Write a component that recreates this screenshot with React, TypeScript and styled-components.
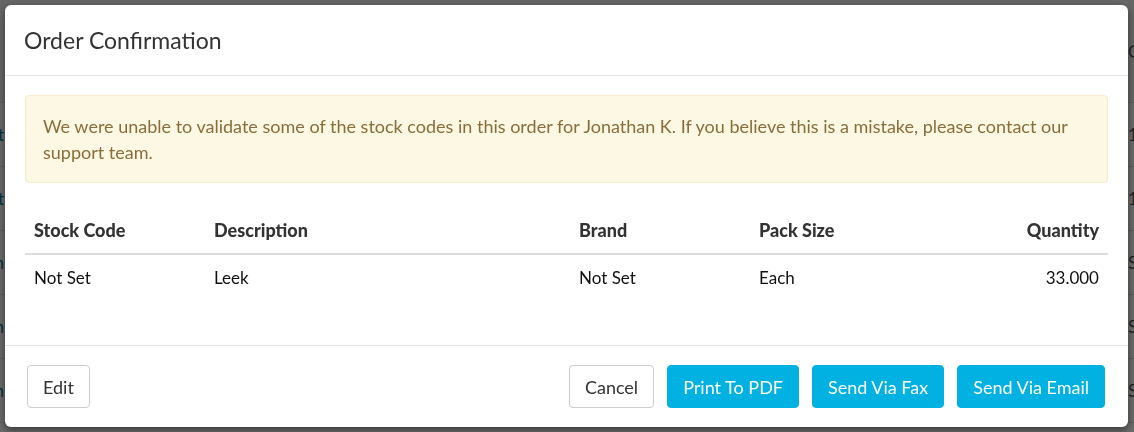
import React from 'react';
import styled, { createGlobalStyle } from 'styled-components';

interface OrderLine {
  stockCode: string;
  description: string;
  brand: string;
  packSize: string;
  quantity: number;
}

const lines: OrderLine[] = [
  { stockCode: 'Not Set', description: 'Leek', brand: 'Not Set', packSize: 'Each', quantity: 33 },
];

const behindRows = [
  { left: 'Chestnut', right: '1' },
  { left: 'Apricot', right: '1' },
  { left: 'Smith', right: 'Sent' },
  { left: 'Smith', right: 'Sent' },
  { left: 'Smith', right: 'Sent' },
];

const GlobalStyle = createGlobalStyle`
  html, body {
    margin: 0;
    padding: 0;
    background: #ffffff;
  }
  body {
    font-family: Lato, "Open Sans", Arial, sans-serif;
    color: #222;
  }
`;

const App: React.FC = () => (
  <>
    <GlobalStyle />
    <PageBehind>
      <PageHead>
        <HeadCell />
        <RightText>Created</RightText>
      </PageHead>
      {behindRows.map((row, i) => (
        <BehindRow key={i}>
          <LeftText>{row.left}</LeftText>
          <RightText>{row.right}</RightText>
        </BehindRow>
      ))}
    </PageBehind>
    <Backdrop>
      <Dialog>
        <Header>
          <Title>Order Confirmation</Title>
        </Header>
        <Body>
          <Alert>
            We were unable to validate some of the stock codes in this order for Jonathan K. If you
            believe this is a mistake, please contact our support team.
          </Alert>
          <Table>
            <colgroup>
              <col style={{ width: 180 }} />
              <col style={{ width: 365 }} />
              <col style={{ width: 180 }} />
              <col style={{ width: 180 }} />
              <col />
            </colgroup>
            <thead>
              <tr>
                <Th>Stock Code</Th>
                <Th>Description</Th>
                <Th>Brand</Th>
                <Th>Pack Size</Th>
                <Th alignRight>Quantity</Th>
              </tr>
            </thead>
            <tbody>
              {lines.map((line, i) => (
                <tr key={i}>
                  <Td>{line.stockCode}</Td>
                  <Td>{line.description}</Td>
                  <Td>{line.brand}</Td>
                  <Td>{line.packSize}</Td>
                  <Td alignRight>{line.quantity.toFixed(3)}</Td>
                </tr>
              ))}
            </tbody>
          </Table>
        </Body>
        <Footer>
          <Button>Edit</Button>
          <Actions>
            <Button>Cancel</Button>
            <Button primary>Print To PDF</Button>
            <Button primary>Send Via Fax</Button>
            <Button primary>Send Via Email</Button>
          </Actions>
        </Footer>
      </Dialog>
    </Backdrop>
  </>
);

const PageBehind = styled.div`
  height: 432px;
  overflow: hidden;
  background: #ffffff;
`;

const PageHead = styled.div`
  height: 102px;
  display: flex;
  justify-content: space-between;
  align-items: center;
  background: #f4f4f4;
  border-bottom: 1px solid #e0e0e0;
`;

const HeadCell = styled.div`
  width: 4px;
`;

const BehindRow = styled.div`
  height: 63px;
  display: flex;
  justify-content: space-between;
  align-items: center;
  border-bottom: 1px solid #e0e0e0;
`;

const LeftText = styled.div`
  width: 4px;
  overflow: hidden;
  direction: rtl;
  white-space: nowrap;
  font-size: 17px;
  color: #007a94;
`;

const RightText = styled.div`
  width: 6px;
  overflow: hidden;
  white-space: nowrap;
  font-size: 17px;
  color: #555;
`;

const Backdrop = styled.div`
  position: fixed;
  inset: 0;
  background: rgba(0, 0, 0, 0.58);
  padding: 5px 6px 5px 5px;
  display: flex;
  align-items: flex-start;
`;

const Dialog = styled.div`
  width: 1123px;
  background: #ffffff;
  border-radius: 6px;
  box-shadow: 0 3px 9px rgba(0, 0, 0, 0.5);
  display: flex;
  flex-direction: column;
`;

const Header = styled.div`
  padding: 18px 19px;
  border-bottom: 1px solid #e5e5e5;
`;

const Title = styled.h4`
  margin: 0;
  font-size: 23px;
  font-weight: 400;
  line-height: 34px;
  color: #333;
`;

const Body = styled.div`
  padding: 19px 20px 20px;
`;

const Alert = styled.div`
  padding: 17px 17px;
  border: 1px solid #faebcc;
  border-radius: 4px;
  background: #fcf8e3;
  color: #8a6d3b;
  font-size: 18px;
  line-height: 26px;
  margin-bottom: 24px;
`;

const Table = styled.table`
  width: 100%;
  border-collapse: collapse;
  table-layout: fixed;
  margin-bottom: 24px;
`;

const Th = styled.th<{ alignRight?: boolean }>`
  padding: 8px 9px;
  border-bottom: 2px solid #dddddd;
  text-align: ${({ alignRight }) => (alignRight ? 'right' : 'left')};
  font-size: 18px;
  font-weight: 900;
  line-height: 30px;
  color: #333;
`;

const Td = styled.td<{ alignRight?: boolean }>`
  padding: 8px 9px;
  text-align: ${({ alignRight }) => (alignRight ? 'right' : 'left')};
  font-size: 17px;
  line-height: 30px;
  color: #111;
`;

const Footer = styled.div`
  padding: 19px 23px 19px 22px;
  border-top: 1px solid #e5e5e5;
  display: flex;
  justify-content: space-between;
  align-items: center;
`;

const Actions = styled.div`
  display: flex;
  gap: 13px;
`;

const Button = styled.button<{ primary?: boolean }>`
  height: 43px;
  padding: 0 15px;
  border-radius: 4px;
  border: 1px solid ${({ primary }) => (primary ? '#00b1e1' : '#cccccc')};
  background: ${({ primary }) => (primary ? '#00b1e1' : '#ffffff')};
  color: ${({ primary }) => (primary ? '#ffffff' : '#333333')};
  font-family: inherit;
  font-size: 18px;
  line-height: 1;
  cursor: pointer;
`;

export default App;
